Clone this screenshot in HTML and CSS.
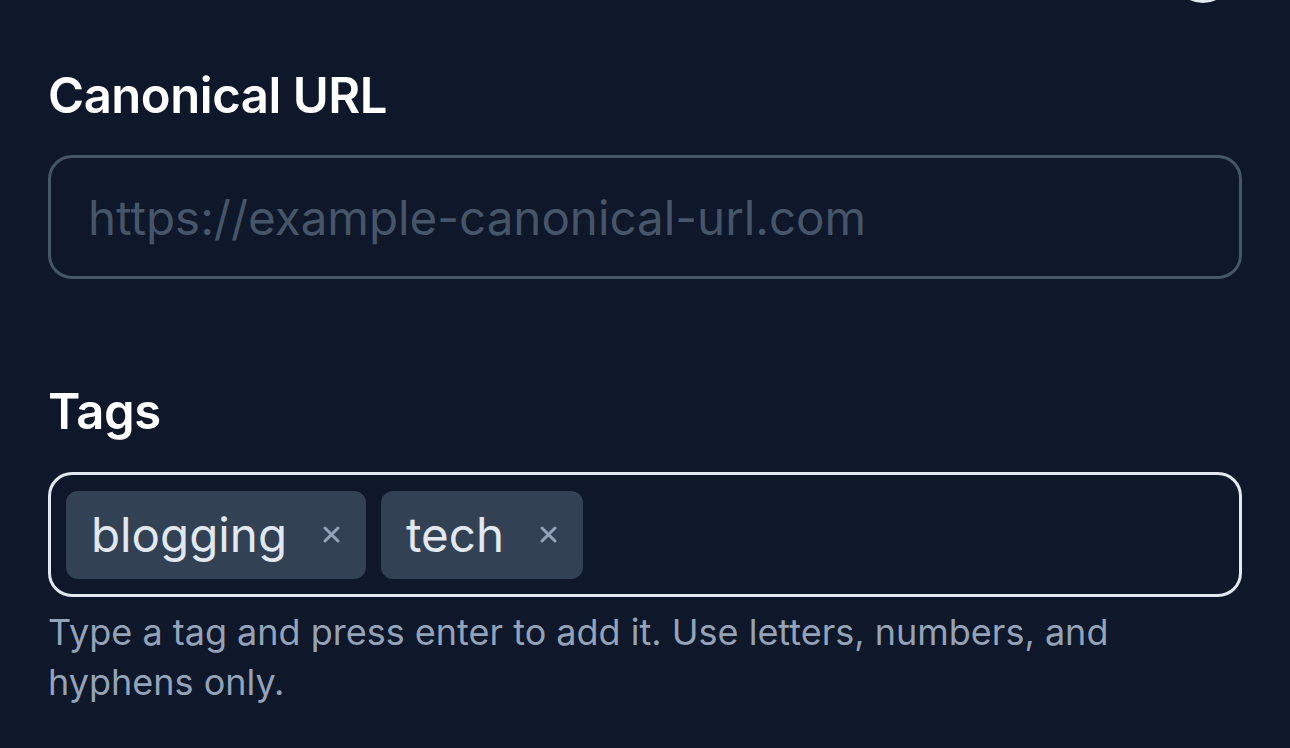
FILE: index.html
```html
<!DOCTYPE html>
<html lang="en">
<head>
<meta charset="utf-8">
<title>Post settings</title>
<link rel="stylesheet" href="styles.css">
</head>
<body>
<div class="page">
  <div class="topbar"><span class="top-icon"></span></div>
  <div class="field">
    <label class="label" for="canon">Canonical URL</label>
    <input id="canon" class="text-input" type="text" placeholder="https://example-canonical-url.com">
  </div>
  <div class="field field-tags">
    <label class="label">Tags</label>
    <div class="tag-box">
      <span class="chip"><span class="chip-text">blogging</span><span class="chip-x">
        <svg viewBox="0 0 17 17" width="17" height="17"><path d="M2 2L15 15M15 2L2 15" stroke="currentColor" stroke-width="3" stroke-linecap="round"/></svg>
      </span></span>
      <span class="chip"><span class="chip-text">tech</span><span class="chip-x">
        <svg viewBox="0 0 17 17" width="17" height="17"><path d="M2 2L15 15M15 2L2 15" stroke="currentColor" stroke-width="3" stroke-linecap="round"/></svg>
      </span></span>
    </div>
    <p class="help">Type a tag and press enter to add it. Use letters, numbers, and hyphens only.</p>
  </div>
</div>
</body>
</html>
```
FILE: styles.css
```css
html, body {
  margin: 0;
  padding: 0;
  background: #0f172a;
}
body {
  font-family: Inter, "Noto Sans", sans-serif;
  color: #f8fafc;
  overflow: hidden;
}
.page {
  padding: 0 48px;
  height: 748px;
  box-sizing: border-box;
}
.topbar {
  height: 0;
  display: flex;
  justify-content: flex-end;
  padding-right: 9px;
}
.top-icon {
  display: block;
  width: 60px;
  height: 60px;
  margin-top: -57px;
  border-radius: 50%;
  border: 4px solid #e2e8f0;
  box-sizing: border-box;
}
.field {
  display: flex;
  flex-direction: column;
}
.label {
  font-size: 49px;
  font-weight: 600;
  line-height: 60px;
  color: #ffffff;
  padding-top: 66px;
  letter-spacing: -0.45px;
}
.text-input {
  margin-top: 29px;
  height: 124px;
  box-sizing: border-box;
  border: 3px solid #475569;
  border-radius: 24px;
  background: transparent;
  padding: 0 37px;
  font-family: Inter, "Noto Sans", sans-serif;
  font-size: 47.5px;
  color: #e2e8f0;
  outline: none;
}
.text-input::placeholder {
  color: #475569;
}
.field-tags .label {
  padding-top: 103px;
}
.tag-box {
  margin-top: 30px;
  height: 125px;
  box-sizing: border-box;
  border: 3px solid #e2e8f0;
  border-radius: 24px;
  padding: 15px;
  display: flex;
  gap: 15px;
  align-items: center;
}
.chip {
  display: flex;
  align-items: center;
  height: 88px;
  border-radius: 12px;
  background: #334155;
  padding: 0 26px 0 25px;
}
.chip-text {
  font-size: 47.5px;
  color: #e2e8f0;
  line-height: 60px;
}
.chip-x {
  margin-left: 36px;
  display: flex;
  color: #94a3b8;
}
.help {
  margin: 10px 0 0;
  font-size: 36px;
  line-height: 50px;
  color: #94a3b8;
}
```
